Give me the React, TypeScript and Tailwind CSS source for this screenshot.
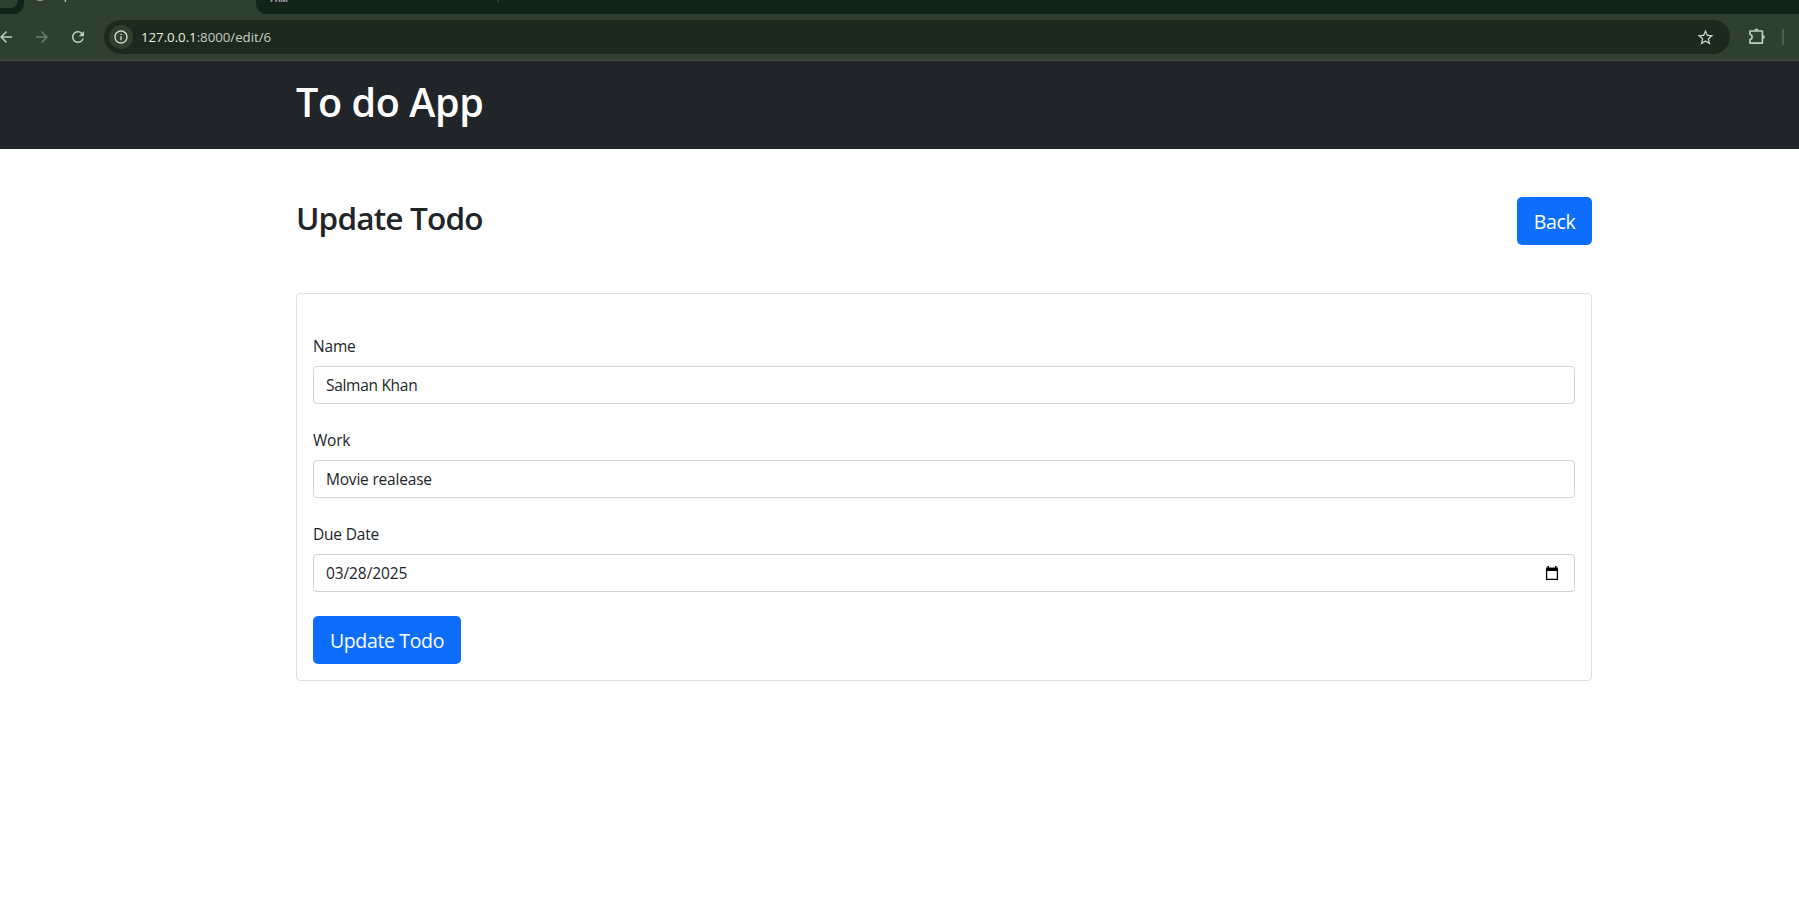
import type { ReactNode } from "react";
import { MdArrowBack, MdArrowForward, MdOutlineInfo, MdRefresh, MdStarBorder } from "react-icons/md";

function ExtensionIcon() {
  return (
    <svg width="18" height="18" viewBox="0 0 18 18" fill="none" stroke="currentColor" strokeWidth="1.7" strokeLinejoin="round">
      <path d="M2 4H14.4V16.1H2V12.6A2.6 2.6 0 0 0 2 7.5Z" />
      <path d="M6.4 3.6a2.1 2.2 0 0 1 4.2 0ZM14.6 7.9a2.2 2.1 0 0 1 0 4.2Z" fill="currentColor" stroke="none" />
    </svg>
  );
}

function CalendarIcon() {
  return (
    <svg width="14" height="15" viewBox="0 0 14 15">
      <path d="M1.6 4V13.4H12.4V4" fill="none" stroke="#000" strokeWidth="1.3" />
      <path d="M1 1.5H13V5H1ZM2.5 0H4V2H2.5ZM10 0H11.5V2H10Z" fill="#000" />
    </svg>
  );
}

function TabStrip() {
  return (
    <div className="flex h-[14px] overflow-hidden bg-[#2f402e]">
      <div className="h-[14px] w-6 rounded-br-[10px] bg-[#132317]">
        <div className="h-2 w-[18px] rounded-br-[8px] bg-[#2f402e]" />
      </div>
      <div className="flex w-[232px] items-start pl-[9px]">
        <div className="-mt-[13px] size-[14px] rounded-full bg-[#9aa0a6]" />
        <div className="-mt-[13px] ml-[8px] text-[12px] leading-4 text-[#dfe8dc]">Update Todo</div>
      </div>
      <div className="flex flex-1 items-start rounded-bl-[10px] bg-[#132317] pl-[14px]">
        <div className="-mt-[7px] w-[227px] text-[8px] font-bold leading-[11px] text-[#a5a8bb]">PAM</div>
        <div className="h-[2px] w-[2px] bg-[#2f402e]" />
      </div>
    </div>
  );
}

function Toolbar() {
  return (
    <div className="flex h-[46px] items-center bg-[#2f402e] text-[#b9cfb6]">
      <div className="flex w-[104px] shrink-0 items-center">
        <MdArrowBack className="-ml-[3px] size-[18px]" />
        <MdArrowForward className="ml-[18px] size-[18px] text-[#6c7f69]" />
        <MdRefresh className="ml-[18px] size-[18px]" />
      </div>
      <div className="flex h-[34px] w-[1626px] shrink-0 items-center rounded-full bg-[#1b2a1c] pl-[5px] pr-[15px]">
        <div className="flex size-6 items-center justify-center rounded-full bg-[#2f402e] text-[#d3dfcf]">
          <MdOutlineInfo className="size-4" />
        </div>
        <div className="ml-2 flex-1 text-[13.3px] leading-5 tracking-[-0.05px] text-[#c3cbc1]">
          <span className="text-[#e8efe5]">127.0.0.1</span>:8000/edit/6
        </div>
        <MdStarBorder className="size-[19px] text-[#ccd3c8]" />
      </div>
      <div className="ml-[18px] -mt-[2px]">
        <ExtensionIcon />
      </div>
      <div className="ml-4 h-4 w-[2px] bg-[#4a5f48]" />
    </div>
  );
}

function Field({ label, className, children }: { label: string; className: string; children: ReactNode }) {
  return (
    <div className="mt-6">
      <div className="mb-2 text-[15.5px] leading-6 tracking-[-0.2px]">{label}</div>
      <div className={`flex h-[38px] items-center rounded-[4px] border border-[#ced4da] bg-white pl-3 pr-[15px] text-[15.5px] leading-6 ${className}`}>
        {children}
      </div>
    </div>
  );
}

export default function App() {
  return (
    <div className="h-[921px] w-[1799px] overflow-hidden bg-white font-['Open_Sans','Noto_Sans',sans-serif] text-[#212529]">
      <TabStrip />
      <Toolbar />
      <div className="h-px bg-[#454a45]" />
      <header className="h-[88px] bg-[#212529] pl-[296px] pt-[17px]">
        <h1 className="text-[39.5px] font-semibold leading-[48px] tracking-[-0.4px] text-white">To do App</h1>
      </header>
      <main className="ml-[296px] mt-12 w-[1296px]">
        <div className="flex items-start justify-between">
          <h2 className="pt-[2px] text-[31.5px] font-semibold leading-[38px] tracking-[-0.8px]">Update Todo</h2>
          <button className="h-12 w-[75px] rounded-[5px] bg-[#0d6efd] pt-[2px] text-[19.5px] leading-[30px] tracking-[-0.35px] text-white">Back</button>
        </div>
        <div className="mt-12 h-[388px] rounded-[4px] border border-[#dfdfdf] px-4 pt-4">
          <Field label="Name" className="tracking-[-0.3px]">Salman Khan</Field>
          <Field label="Work" className="tracking-[-0.2px]">Movie realease</Field>
          <Field label="Due Date" className="justify-between tracking-[-0.1px]">
            <span>03/28/2025</span>
            <CalendarIcon />
          </Field>
          <button className="mt-6 block h-12 w-[148px] rounded-[5px] bg-[#0d6efd] pt-[2px] text-[19.5px] leading-[30px] tracking-[-0.35px] text-white">Update Todo</button>
        </div>
      </main>
    </div>
  );
}
